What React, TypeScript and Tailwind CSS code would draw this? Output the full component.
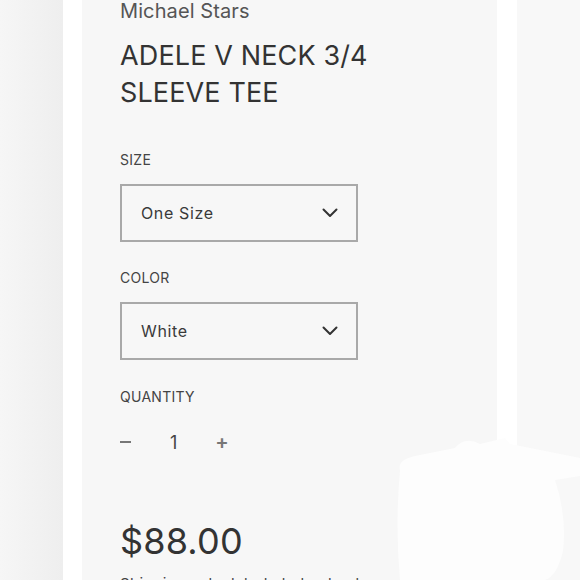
import React from "react";

const Chevron = () => (
  <svg width="16" height="10" viewBox="0 0 16 10" fill="none">
    <path d="M1.5 1.5 L8 8 L14.5 1.5" stroke="#333" strokeWidth="2" strokeLinecap="round" strokeLinejoin="round" />
  </svg>
);

const Select = ({ value }: { value: string }) => (
  <div className="w-[238px] h-[58px] border-2 border-[#a9a9a9] flex items-center justify-between pl-[19px] pr-[18px]">
    <span className="text-[16px] tracking-[0.04em] text-[#3a3a3a]">{value}</span>
    <Chevron />
  </div>
);

export default function App() {
  return (
    <div className="w-[580px] h-[580px] overflow-hidden relative flex bg-white" style={{ fontFamily: "Inter, 'Open Sans', sans-serif" }}>
      <div className="w-[63px] h-full bg-gradient-to-r from-[#f6f6f6] to-[#eeeeee]" />
      <div className="w-[19px] h-full bg-white" />
      <div className="w-[415px] h-full bg-[#f7f7f7] pl-[38px] flex flex-col text-[#383838]">
        <div className="text-[20px] leading-[24px] mt-[-1px] tracking-[0.005em] text-[#555]">Michael Stars</div>
        <div className="text-[27px] leading-[37px] mt-[14px] tracking-[0.005em] text-[#333]">
          ADELE V NECK 3/4
          <br />
          SLEEVE TEE
        </div>
        <div className="text-[14px] leading-[18px] mt-[40px] tracking-[0.02em] text-[#444]">SIZE</div>
        <div className="mt-[15px]"><Select value="One Size" /></div>
        <div className="text-[14px] leading-[18px] mt-[27px] tracking-[0.02em] text-[#444]">COLOR</div>
        <div className="mt-[15px]"><Select value="White" /></div>
        <div className="text-[14px] leading-[18px] mt-[28px] tracking-[0.02em] text-[#444]">QUANTITY</div>
        <div className="flex items-center mt-[24px] h-[24px] text-[#444]">
          <span className="w-[11px] h-[2px] bg-[#777]" />
          <span className="ml-[39px] text-[18px]">1</span>
          <span className="ml-[38px] text-[20px] text-[#777] font-semibold leading-none">+</span>
        </div>
        <div className="text-[36px] leading-[40px] mt-[67px] tracking-[0.005em] text-[#333]">$88.00</div>
        <div className="text-[15px] leading-[20px] mt-[13px] text-[#444] tracking-[0.03em]">Shipping calculated at checkout.</div>
      </div>
      <div className="w-[20px] h-full bg-white" />
      <div className="flex-1 h-full bg-[#f8f8f8]" />
      <svg className="absolute left-[395px] top-[436px]" width="185" height="144" viewBox="0 0 185 144">
        <path d="M5 34 Q2 24 20 20 L60 12 Q70 0 85 8 L110 2 L115 8 L185 22 L185 40 L160 44 Q172 80 168 115 Q162 140 150 144 L5 144 Q0 90 5 34 Z" fill="#fdfdfd" />
      </svg>
    </div>
  );
}
